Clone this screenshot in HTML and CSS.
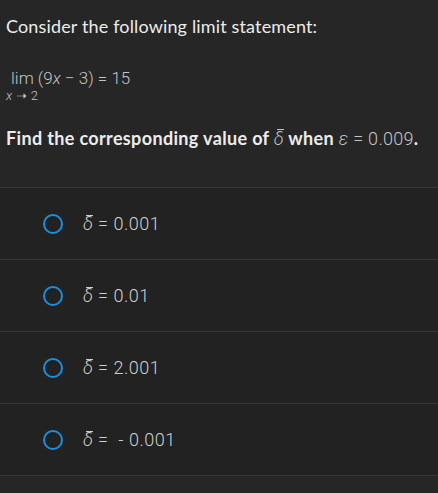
FILE: index.html
```html
<!DOCTYPE html>
<html lang="en">
<head>
  <meta charset="UTF-8">
  <title>Limit question</title>
  <link rel="stylesheet" href="styles.css">
</head>
<body>

  <div class="question">
    <p class="intro">Consider the following limit statement:</p>

    <div class="limit">
      <div class="lim-top">lim <span class="expr">(9<i>x</i> &minus; 3) = 15</span></div>
      <div class="lim-sub"><i>x</i> &#10141; 2</div>
    </div>

    <p class="ask">Find the corresponding value of <span class="math"><i class="delta">&delta;</i></span> when <span class="math"><i>&epsilon;</i> = 0.009</span>.</p>
  </div>

  <ul class="options">
    <li class="option"><span class="radio"></span><span class="math"><i class="delta">&delta;</i> = 0.001</span></li>
    <li class="option"><span class="radio"></span><span class="math"><i class="delta">&delta;</i> = 0.01</span></li>
    <li class="option"><span class="radio"></span><span class="math"><i class="delta">&delta;</i> = 2.001</span></li>
    <li class="option"><span class="radio"></span><span class="math"><i class="delta">&delta;</i> = &nbsp;- 0.001</span></li>
  </ul>

</body>
</html>
```

FILE: styles.css
```css
html, body {
  margin: 0;
  padding: 0;
  background-color: #262626;
  font-family: "Lato", "Open Sans", sans-serif;
  color: #ececec;
}

.question {
  padding: 0 6px;
  height: 187px;
  overflow: hidden;
}

.intro {
  margin: 0;
  padding-top: 14px;
  font-size: 18px;
  line-height: 24px;
  letter-spacing: 0.15px;
}

.math, .limit {
  font-family: "Roboto", "Liberation Sans", sans-serif;
  color: #c4c4c4;
  font-weight: 300;
}

.math i, .limit i {
  font-style: italic;
}

.limit {
  margin-top: 30px;
  display: inline-flex;
  flex-direction: column;
  align-items: flex-start;
}

.lim-top {
  font-size: 17px;
  line-height: 20px;
  padding-left: 5px;
}

.lim-sub {
  font-size: 13px;
  line-height: 16px;
  letter-spacing: 0.3px;
}

.delta {
  position: relative;
  display: inline-block;
}

.delta::before {
  content: "";
  position: absolute;
  left: 3px;
  right: 0;
  top: 0.12em;
  border-top: 1px solid currentColor;
}

.ask {
  margin: 22px 0 0;
  font-size: 18px;
  line-height: 24px;
  font-weight: 700;
  letter-spacing: 0.35px;
}

.ask .math {
  font-weight: 300;
  font-size: 18px;
  letter-spacing: 0.3px;
}

.options {
  list-style: none;
  margin: 0;
  padding: 0;
  background-color: #222222;
}

.option {
  display: flex;
  align-items: center;
  height: 71px;
  border-top: 1px solid #363636;
  padding-left: 43px;
}

.option:last-child {
  border-bottom: 1px solid #363636;
}

.radio {
  box-sizing: border-box;
  width: 20px;
  height: 20px;
  border: 2px solid #1a8fdd;
  border-radius: 50%;
  margin-right: 20px;
}

.option .math {
  font-size: 18px;
  letter-spacing: 0.5px;
  color: #cfcfcf;
}
```
